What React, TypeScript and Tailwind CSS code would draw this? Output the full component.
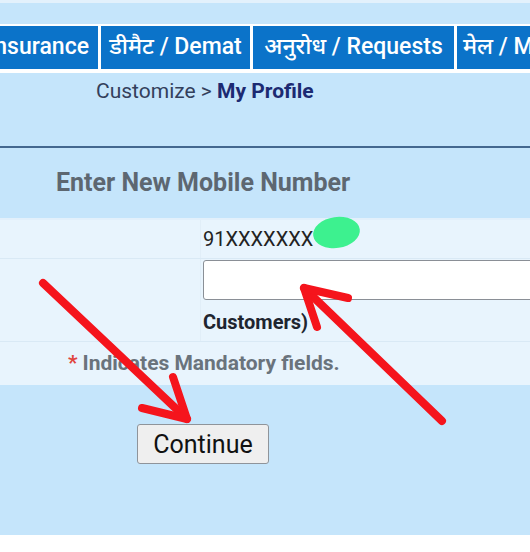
import React from 'react';

const FONT = { fontFamily: 'Roboto, "Noto Sans", "DejaVu Sans", sans-serif' };

const TABS = [
  { label: 'Insurance', w: 'w-[98px] justify-end pr-[9px]' },
  { label: 'डीमैट / Demat', w: 'w-[149px] justify-center' },
  { label: 'अनुरोध / Requests', w: 'w-[201px] justify-center' },
  { label: 'मेल / Mail', w: 'w-[120px] justify-start pl-[6px]' },
];

function Arrows() {
  return (
    <svg className="absolute inset-0 pointer-events-none" width="530" height="552" viewBox="0 0 530 552">
      <g stroke="#f5141c" strokeWidth="8" strokeLinecap="round" strokeLinejoin="round" fill="none">
        <path d="M43 283 L187 419" />
        <path d="M142 408 L187 419 L173 377" />
        <path d="M442 421 L304 288" />
        <path d="M348 298 L304 288 L317 327" />
      </g>
    </svg>
  );
}

export default function App() {
  return (
    <div className="relative w-[530px] h-[552px] overflow-hidden bg-white" style={FONT}>
      <div className="h-[535px] bg-[#c5e5fb] flex flex-col">
        <div className="h-[3px] bg-[#e3f1fc]" />
        <div className="mt-[21px] bg-white pt-[2px] pb-[4px] flex gap-[3px] overflow-hidden">
          {TABS.map(t => (
            <div key={t.label}
              className={`${t.w} shrink-0 h-[43px] bg-[#0b73c9] text-white text-[23px] font-medium flex items-center overflow-hidden whitespace-nowrap`}>
              {t.label}
            </div>
          ))}
        </div>

        <div className="pl-[96px] pt-[3px] h-[73px] text-[21px] text-[#33405c]">
          Customize &gt; <span className="font-bold text-[#1c2a72]">My Profile</span>
        </div>

        <div className="h-[2px] bg-[#44688f]" />

        <div className="h-[70px] flex items-center pl-[56px] text-[25px] font-bold text-[#5d6771]">
          Enter New Mobile Number
        </div>

        <div className="bg-[#e8f4fd] border-t-2 border-[#e2f0fb]">
          <div className="flex h-[39px] border-b border-[#d9e9f5]">
            <div className="w-[201px] shrink-0 border-r border-[#e1eef8]" />
            <div className="flex items-center pl-[2px] text-[20px] text-[#222]">
              <span className="relative">
                91XXXXXXX
                <span className="absolute left-[110px] top-[-7px] w-[47px] h-[31px] rounded-[50%] bg-[#3df18f] rotate-[-8deg]" />
              </span>
            </div>
          </div>

          <div className="flex h-[83px] border-b border-[#d9e9f5]">
            <div className="w-[201px] shrink-0 border-r border-[#e1eef8]" />
            <div className="flex-1 pl-[2px] pt-[1px] overflow-hidden">
              <div className="h-[40px] w-[340px] bg-white border border-[#8a8f96] rounded-[3px]" />
              <div className="mt-[7px] text-[20px] font-bold text-[#1e2530]">Customers)</div>
            </div>
          </div>

          <div className="h-[43px] flex items-center pl-[68px] text-[21px] font-bold text-[#6a737c]">
            <span className="text-[#e0443e] mr-[5px]">*</span>Indicates Mandatory fields.
          </div>
        </div>

        <div className="pl-[137px] pt-[39px]">
          <button className="w-[132px] h-[40px] bg-[#efefef] border border-[#8f949a] rounded-[3px] text-[25px] leading-none text-[#111]">
            Continue
          </button>
        </div>
      </div>
      <Arrows />
    </div>
  );
}
